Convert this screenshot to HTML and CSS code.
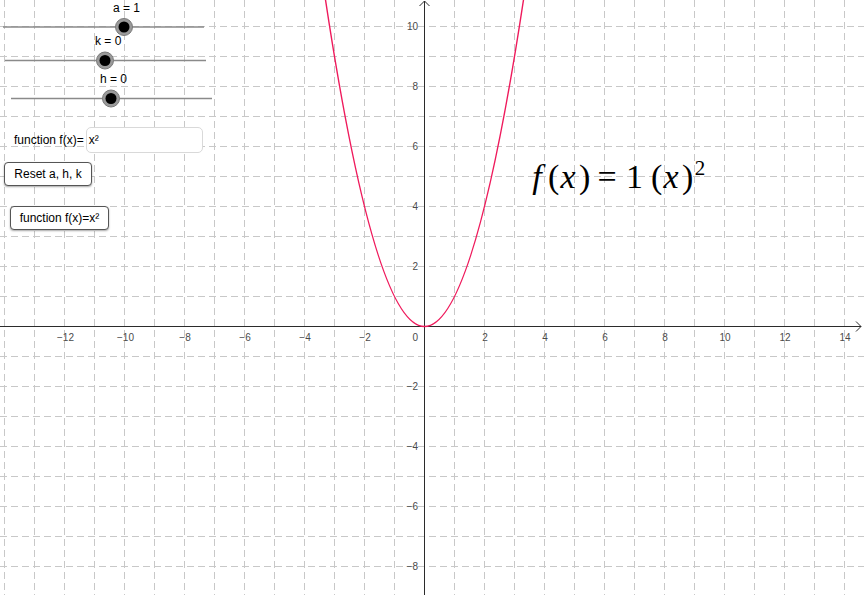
FILE: index.html
```html
<!DOCTYPE html>
<html>
<head>
<meta charset="utf-8">
<link rel="stylesheet" href="styles.css">
</head>
<body>
<div class="canvas">
  <svg class="graph" width="864" height="595" viewBox="0 0 864 595">
    <g class="grid">
      <line x1="4.5" y1="0" x2="4.5" y2="595"/>
      <line x1="34.5" y1="0" x2="34.5" y2="595"/>
      <line x1="64.5" y1="0" x2="64.5" y2="595"/>
      <line x1="94.5" y1="0" x2="94.5" y2="595"/>
      <line x1="124.5" y1="0" x2="124.5" y2="595"/>
      <line x1="154.5" y1="0" x2="154.5" y2="595"/>
      <line x1="184.5" y1="0" x2="184.5" y2="595"/>
      <line x1="214.5" y1="0" x2="214.5" y2="595"/>
      <line x1="244.5" y1="0" x2="244.5" y2="595"/>
      <line x1="274.5" y1="0" x2="274.5" y2="595"/>
      <line x1="304.5" y1="0" x2="304.5" y2="595"/>
      <line x1="334.5" y1="0" x2="334.5" y2="595"/>
      <line x1="364.5" y1="0" x2="364.5" y2="595"/>
      <line x1="394.5" y1="0" x2="394.5" y2="595"/>
      <line x1="454.5" y1="0" x2="454.5" y2="595"/>
      <line x1="484.5" y1="0" x2="484.5" y2="595"/>
      <line x1="514.5" y1="0" x2="514.5" y2="595"/>
      <line x1="544.5" y1="0" x2="544.5" y2="595"/>
      <line x1="574.5" y1="0" x2="574.5" y2="595"/>
      <line x1="604.5" y1="0" x2="604.5" y2="595"/>
      <line x1="634.5" y1="0" x2="634.5" y2="595"/>
      <line x1="664.5" y1="0" x2="664.5" y2="595"/>
      <line x1="694.5" y1="0" x2="694.5" y2="595"/>
      <line x1="724.5" y1="0" x2="724.5" y2="595"/>
      <line x1="754.5" y1="0" x2="754.5" y2="595"/>
      <line x1="784.5" y1="0" x2="784.5" y2="595"/>
      <line x1="814.5" y1="0" x2="814.5" y2="595"/>
      <line x1="844.5" y1="0" x2="844.5" y2="595"/>
      <line x1="0" y1="26.5" x2="864" y2="26.5"/>
      <line x1="0" y1="56.5" x2="864" y2="56.5"/>
      <line x1="0" y1="86.5" x2="864" y2="86.5"/>
      <line x1="0" y1="116.5" x2="864" y2="116.5"/>
      <line x1="0" y1="146.5" x2="864" y2="146.5"/>
      <line x1="0" y1="176.5" x2="864" y2="176.5"/>
      <line x1="0" y1="206.5" x2="864" y2="206.5"/>
      <line x1="0" y1="236.5" x2="864" y2="236.5"/>
      <line x1="0" y1="266.5" x2="864" y2="266.5"/>
      <line x1="0" y1="296.5" x2="864" y2="296.5"/>
      <line x1="0" y1="356.5" x2="864" y2="356.5"/>
      <line x1="0" y1="386.5" x2="864" y2="386.5"/>
      <line x1="0" y1="416.5" x2="864" y2="416.5"/>
      <line x1="0" y1="446.5" x2="864" y2="446.5"/>
      <line x1="0" y1="476.5" x2="864" y2="476.5"/>
      <line x1="0" y1="506.5" x2="864" y2="506.5"/>
      <line x1="0" y1="536.5" x2="864" y2="536.5"/>
      <line x1="0" y1="566.5" x2="864" y2="566.5"/>
    </g>
    <g class="axes">
      <line x1="0" y1="326.5" x2="861" y2="326.5"/>
      <polyline points="856,321.5 861,326.5 856,331.5"/>
      <line x1="424.5" y1="1" x2="424.5" y2="595"/>
      <polyline points="419.5,6 424.5,1 429.5,6"/>
    </g>
    <g class="xlabels">
      <text x="65.5" y="341">−12</text>
      <text x="125.5" y="341">−10</text>
      <text x="185" y="341">−8</text>
      <text x="245" y="341">−6</text>
      <text x="305" y="341">−4</text>
      <text x="365" y="341">−2</text>
      <text x="485" y="341">2</text>
      <text x="545" y="341">4</text>
      <text x="605" y="341">6</text>
      <text x="665" y="341">8</text>
      <text x="725" y="341">10</text>
      <text x="785" y="341">12</text>
      <text x="845" y="341">14</text>
    </g>
    <g class="ylabels">
      <text x="418" y="30">10</text>
      <text x="418" y="90">8</text>
      <text x="418" y="150">6</text>
      <text x="418" y="210">4</text>
      <text x="418" y="270">2</text>
      <text x="418" y="341">0</text>
      <text x="418" y="390">−2</text>
      <text x="418" y="450">−4</text>
      <text x="418" y="510">−6</text>
      <text x="418" y="570">−8</text>
    </g>
    <path class="curve" d="M322.5,-20.3 Q424.5,673.3 526.5,-20.3"/>
    <g class="slider">
      <line x1="3" y1="27" x2="204" y2="27"/>
      <circle class="halo" cx="124" cy="27" r="8.5"/>
      <circle class="dot" cx="124" cy="27" r="5.5"/>
      <text x="113" y="12">a = 1</text>
    </g>
    <g class="slider">
      <line x1="5" y1="60.5" x2="206" y2="60.5"/>
      <circle class="halo" cx="105" cy="60.5" r="8.5"/>
      <circle class="dot" cx="105" cy="60.5" r="5.5"/>
      <text x="95" y="45">k = 0</text>
    </g>
    <g class="slider">
      <line x1="11" y1="98.5" x2="212" y2="98.5"/>
      <circle class="halo" cx="111" cy="98.5" r="8.5"/>
      <circle class="dot" cx="111" cy="98.5" r="5.5"/>
      <text x="100" y="83">h = 0</text>
    </g>
  </svg>

  <div class="input-row">
    <span class="input-label">function f(x)=</span>
    <div class="input-box">x²</div>
  </div>

  <button class="btn btn-reset">Reset a, h, k</button>
  <button class="btn btn-func">function f(x)=x²</button>

  <div class="formula"><span class="g g-f it">f</span><span class="g g-p">(</span><span class="g g-x it">x</span><span class="g g-p">)</span><span class="g g-eq">=</span><span class="g g-one">1</span><span class="g g-p g-p2">(</span><span class="g g-x it">x</span><span class="g g-p">)</span><span class="g g-sup">2</span></div>
</div>
</body>
</html>
```

FILE: styles.css
```css
html, body {
  margin: 0;
  padding: 0;
  background: #ffffff;
}

body {
  width: 864px;
  height: 595px;
  overflow: hidden;
  font-family: "Liberation Sans", Arial, sans-serif;
}

.canvas {
  position: relative;
  width: 864px;
  height: 595px;
}

.graph {
  display: block;
}

.grid line {
  stroke: #c8c8c8;
  stroke-width: 1;
  stroke-dasharray: 7 4;
}

.axes line,
.axes polyline {
  stroke: #2b2b2b;
  stroke-width: 1;
  fill: none;
}

.xlabels text,
.ylabels text {
  font-family: "Liberation Sans", Arial, sans-serif;
  font-size: 10px;
  fill: #4a4a4a;
}

.xlabels text {
  text-anchor: middle;
}

.ylabels text {
  text-anchor: end;
}

.curve {
  fill: none;
  stroke: #ef1a5c;
  stroke-width: 1.4;
}

.slider line {
  stroke: #8a8a8a;
  stroke-width: 1.5;
}

.slider .halo {
  fill: #9a9a9a;
  stroke: #7a7a7a;
  stroke-width: 1;
}

.slider .dot {
  fill: #000000;
}

.slider text {
  font-family: "Liberation Sans", Arial, sans-serif;
  font-size: 12px;
  fill: #000000;
}

.input-row {
  position: absolute;
  left: 14px;
  top: 127px;
  display: flex;
  align-items: center;
  gap: 2px;
  font-size: 12px;
  color: #000;
}

.input-box {
  box-sizing: border-box;
  width: 117px;
  height: 26px;
  border: 1px solid #d9d9d9;
  border-radius: 5px;
  padding: 0 2px;
  display: flex;
  align-items: center;
  background: #fff;
}

.btn {
  position: absolute;
  box-sizing: border-box;
  height: 24px;
  padding: 0;
  background: #ffffff;
  border: 1px solid #555555;
  border-radius: 4px;
  box-shadow: 0 1px 2px rgba(0, 0, 0, 0.35);
  font-family: "Liberation Sans", Arial, sans-serif;
  font-size: 12px;
  color: #000;
  text-align: center;
}

.btn-reset {
  left: 4px;
  top: 162px;
  width: 88px;
}

.btn-func {
  left: 10px;
  top: 206px;
  width: 99px;
}

.formula {
  position: absolute;
  left: 526px;
  top: 158px;
  white-space: nowrap;
  font-family: "Liberation Serif", "Times New Roman", serif;
  font-size: 34px;
  line-height: 34px;
  color: #000;
}

.g {
  display: inline-block;
  text-align: center;
  vertical-align: baseline;
}

.it {
  font-style: italic;
}

.g-f { width: 22px; }
.g-p { width: 9px; }
.g-x { width: 22px; }
.g-eq { width: 26px; margin: 0 6px; }
.g-one { width: 17px; }
.g-p2 { margin-left: 8px; }
.g-sup {
  width: 12px;
  margin-left: 3px;
  font-size: 21px;
  line-height: 21px;
  vertical-align: 13px;
}
```
